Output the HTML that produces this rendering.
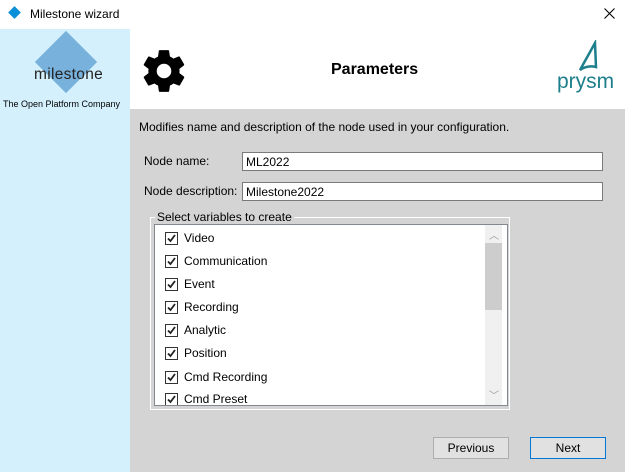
<!DOCTYPE html>
<html><head><style>
body{margin:0;width:625px;height:472px;overflow:hidden;font-family:"Liberation Sans",sans-serif;font-size:12px;color:#000;background:#d4d4d4;position:relative}
.a{position:absolute}
.inp{position:absolute;background:#fff;border:1px solid #7a7a7a;height:19px;box-sizing:border-box;left:242px;width:361px;padding:2px 3px;font-size:12px}
.cb{position:absolute;left:165px;width:11px;height:11px;border:1px solid #333;background:#fff}
.cb svg{position:absolute;left:0;top:0}
.lbl{position:absolute;left:184px;font-size:12px}
.btn{position:absolute;top:437px;width:76px;height:22px;box-sizing:border-box;border:1px solid #adadad;background:#e1e1e1;text-align:center;line-height:20px;font-size:12px}
</style></head><body>
<div class="a" style="left:0;top:0;width:625px;height:29px;background:#fff"></div>
<div class="a" style="left:10px;top:8px;width:9px;height:9px;background:#0a8fd8;transform:rotate(45deg)"></div>
<div class="a" style="left:30px;top:7px;font-size:12px">Milestone wizard</div>
<svg class="a" style="left:604px;top:8px" width="11" height="11"><path d="M0.5 0.5L10.5 10.5M10.5 0.5L0.5 10.5" stroke="#000" stroke-width="1.1"/></svg>
<div class="a" style="left:0;top:29px;width:130px;height:443px;background:#d4f0fd"></div>
<div class="a" style="left:44px;top:40px;width:44px;height:44px;background:#78b1dc;transform:rotate(45deg)"></div>
<div class="a" style="left:34px;top:66px;font-size:15.5px;color:#222;letter-spacing:0.3px;font-weight:300">milestone</div>
<div class="a" style="left:3px;top:99px;font-size:9px;color:#000">The Open Platform Company</div>
<div class="a" style="left:130px;top:29px;width:495px;height:80px;background:#fff"></div>
<svg class="a" style="left:139px;top:46px" width="50" height="50" viewBox="0 0 24 24"><path fill="#000" d="M19.4 13c.04-.33.06-.66.06-1s-.02-.67-.06-1l2.1-1.650c.19-.15.24-.42.12-.64l-2-3.46c-.12-.22-.39-.3-.61-.22l-2.49 1c-.52-.4-1.080-.73-1.69-.98l-.38-2.65A.49.49 0 0 0 14 2h-4c-.25 0-.46.18-.49.42l-.38 2.65c-.61.25-1.17.59-1.69.98l-2.49-1c-.23-.09-.49 0-.61.22l-2 3.46c-.13.22-.07.49.12.64L4.57 11c-.04.33-.07.67-.07 1s.03.67.07 1l-2.11 1.65c-.19.15-.24.42-.12.64l2 3.46c.12.22.39.3.61.22l2.49-1c.52.4 1.08.73 1.69.98l.38 2.65c.03.24.24.42.49.42h4c.25 0 .46-.18.49-.42l.38-2.65c.61-.25 1.17-.59 1.69-.98l2.49 1c.23.09.49 0 .61-.22l2-3.46c.12-.22.07-.49-.12-.64L19.4 13zM12 15.5a3.5 3.5 0 1 1 0-7 3.5 3.5 0 0 1 0 7z"/></svg>
<div class="a" style="left:331px;top:61px;font-size:16px;font-weight:bold">Parameters</div>
<svg class="a" style="left:572px;top:40px" width="30" height="34" viewBox="0 0 30 34"><path d="M23 3 L8 30 Q15 25 24 27 Z" fill="none" stroke="#1e7f8c" stroke-width="2.5"/></svg>
<div class="a" style="left:557px;top:70px;font-size:21px;color:#1e7f8c;letter-spacing:0px">prysm</div>
<div class="a" style="left:139px;top:120px">Modifies name and description of the node used in your configuration.</div>
<div class="a" style="left:144px;top:154px">Node name:</div>
<div class="inp" style="top:152px">ML2022</div>
<div class="a" style="left:144px;top:184px">Node description:</div>
<div class="inp" style="top:182px">Milestone2022</div>
<div class="a" style="left:150px;top:217px;width:360px;height:193px;border:1px solid #fff;box-sizing:border-box"></div>
<div class="a" style="left:155px;top:210px;background:#d4d4d4;padding:0 2px">Select variables to create</div>
<div class="a" style="left:154px;top:224px;width:354px;height:182px;background:#fff;border:1px solid #828790;box-sizing:border-box;overflow:hidden">
<div class="a" style="left:330px;top:0;width:17px;height:180px;background:#f0f0f0"></div>
<div class="a" style="left:330px;top:18px;width:17px;height:67px;background:#cdcdcd"></div>
<div class="a" style="left:334px;top:2px;color:#999;font-size:10px">︿</div>
<div class="a" style="left:334px;top:162px;color:#999;font-size:10px">﹀</div>
</div>
<div class="cb" style="top:232px"><svg width="11" height="11"><path d="M2 5.5 L4.5 8 L9 2" stroke="#222" stroke-width="1.8" fill="none"/></svg></div><div class="lbl" style="top:231px">Video</div>
<div class="cb" style="top:255px"><svg width="11" height="11"><path d="M2 5.5 L4.5 8 L9 2" stroke="#222" stroke-width="1.8" fill="none"/></svg></div><div class="lbl" style="top:254px">Communication</div>
<div class="cb" style="top:278px"><svg width="11" height="11"><path d="M2 5.5 L4.5 8 L9 2" stroke="#222" stroke-width="1.8" fill="none"/></svg></div><div class="lbl" style="top:277px">Event</div>
<div class="cb" style="top:301px"><svg width="11" height="11"><path d="M2 5.5 L4.5 8 L9 2" stroke="#222" stroke-width="1.8" fill="none"/></svg></div><div class="lbl" style="top:300px">Recording</div>
<div class="cb" style="top:324px"><svg width="11" height="11"><path d="M2 5.5 L4.5 8 L9 2" stroke="#222" stroke-width="1.8" fill="none"/></svg></div><div class="lbl" style="top:323px">Analytic</div>
<div class="cb" style="top:347px"><svg width="11" height="11"><path d="M2 5.5 L4.5 8 L9 2" stroke="#222" stroke-width="1.8" fill="none"/></svg></div><div class="lbl" style="top:346px">Position</div>
<div class="cb" style="top:371px"><svg width="11" height="11"><path d="M2 5.5 L4.5 8 L9 2" stroke="#222" stroke-width="1.8" fill="none"/></svg></div><div class="lbl" style="top:370px">Cmd Recording</div>
<div style="position:absolute;left:155px;top:390px;width:328px;height:15px;overflow:hidden">
<div class="cb" style="left:10px;top:3px"><svg width="11" height="11"><path d="M2 5.5 L4.5 8 L9 2" stroke="#222" stroke-width="1.8" fill="none"/></svg></div><div class="lbl" style="left:29px;top:2px">Cmd Preset</div></div>
<div class="btn" style="left:433px">Previous</div>
<div class="btn" style="left:530px;border:1px solid #0078d7">Next</div>
</body></html>
